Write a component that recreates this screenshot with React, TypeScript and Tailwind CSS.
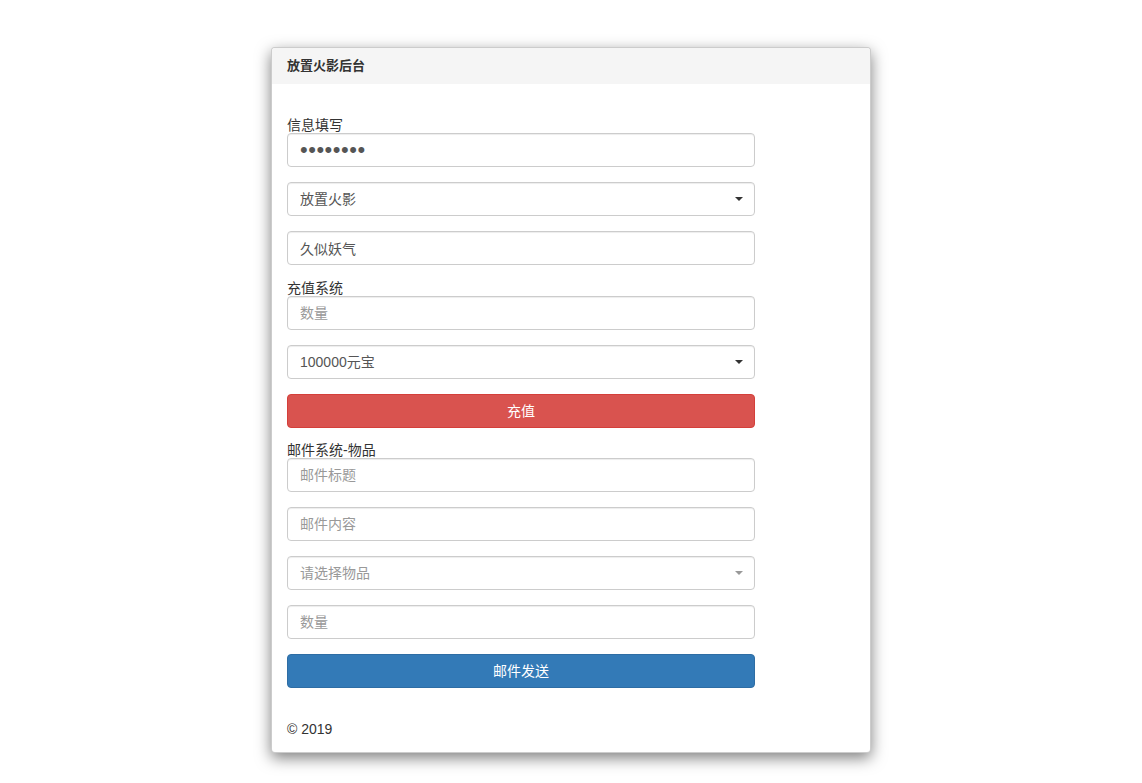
import React from "react";

const font = { fontFamily: '"Liberation Sans", "Noto Sans CJK SC", sans-serif' };

function Caret({ muted }: { muted?: boolean }) {
  return (
    <span
      className={`pointer-events-none absolute right-[12px] top-1/2 -translate-y-1/2 h-0 w-0 border-x-[4px] border-t-[4px] border-x-transparent ${
        muted ? "border-t-[#999]" : "border-t-[#333]"
      }`}
    />
  );
}

function Field({ placeholder, value, type = "text", extra = "" }: { placeholder?: string; value?: string; type?: string; extra?: string }) {
  return (
    <input
      type={type}
      defaultValue={value}
      placeholder={placeholder}
      className={`mb-[15px] block h-[34px] w-[468px] rounded-[4px] border border-[#ccc] bg-white px-[12px] text-[#555] placeholder:text-[#999] shadow-[inset_0_1px_1px_rgba(0,0,0,0.075)] outline-none ${
        extra || "text-[14px]"
      }`}
    />
  );
}

function Select({ options, muted }: { options: string[]; muted?: boolean }) {
  return (
    <div className="relative mb-[15px] w-[468px]">
      <select
        defaultValue={options[0]}
        className={`block h-[34px] w-full appearance-none rounded-[4px] border border-[#ccc] bg-white px-[12px] text-[14px] shadow-[inset_0_1px_1px_rgba(0,0,0,0.075)] outline-none ${
          muted ? "text-[#999]" : "text-[#555]"
        }`}
      >
        {options.map((o) => (
          <option key={o}>{o}</option>
        ))}
      </select>
      <Caret muted={muted} />
    </div>
  );
}

function Label({ children }: { children: React.ReactNode }) {
  return <div className="h-[15px] text-[14px] leading-[15px] text-[#333]">{children}</div>;
}

export default function App() {
  return (
    <div className="min-h-screen bg-white pt-[47px]" style={font}>
      <div className="mx-auto w-[600px] overflow-hidden rounded-[4px] border border-[rgba(0,0,0,0.2)] bg-white shadow-[0_5px_15px_rgba(0,0,0,0.5)]">
        {/* 标题 */}
        <div className="flex h-[36px] items-center bg-[#f5f5f5] px-[15px] text-[13px] font-bold text-[#333]">
          放置火影后台
        </div>

        <div className="px-[15px] pb-[13px] pt-[34px]">
          <Label>信息填写</Label>
          <Field type="password" value="12345678" extra="text-[22px] tracking-[0.5px]" />
          <Select options={["放置火影"]} />
          <input
            defaultValue="久似妖气"
            className="mb-[16px] block h-[34px] w-[468px] rounded-[4px] border border-[#ccc] bg-white px-[12px] text-[14px] text-[#555] shadow-[inset_0_1px_1px_rgba(0,0,0,0.075)] outline-none"
          />

          <Label>充值系统</Label>
          <Field placeholder="数量" />
          <Select options={["100000元宝"]} />
          <button className="mb-[15px] block h-[34px] w-[468px] rounded-[4px] border border-[#d43f3a] bg-[#d9534f] text-[14px] text-white">
            充值
          </button>

          <Label>邮件系统-物品</Label>
          <Field placeholder="邮件标题" />
          <Field placeholder="邮件内容" />
          <Select options={["请选择物品"]} muted />
          <Field placeholder="数量" />
          <button className="block h-[34px] w-[468px] rounded-[4px] border border-[#2e6da4] bg-[#337ab7] text-[14px] text-white">
            邮件发送
          </button>

          <div className="mt-[31px] text-[14px] leading-[20px] text-[#333]">© 2019</div>
        </div>
      </div>
    </div>
  );
}
